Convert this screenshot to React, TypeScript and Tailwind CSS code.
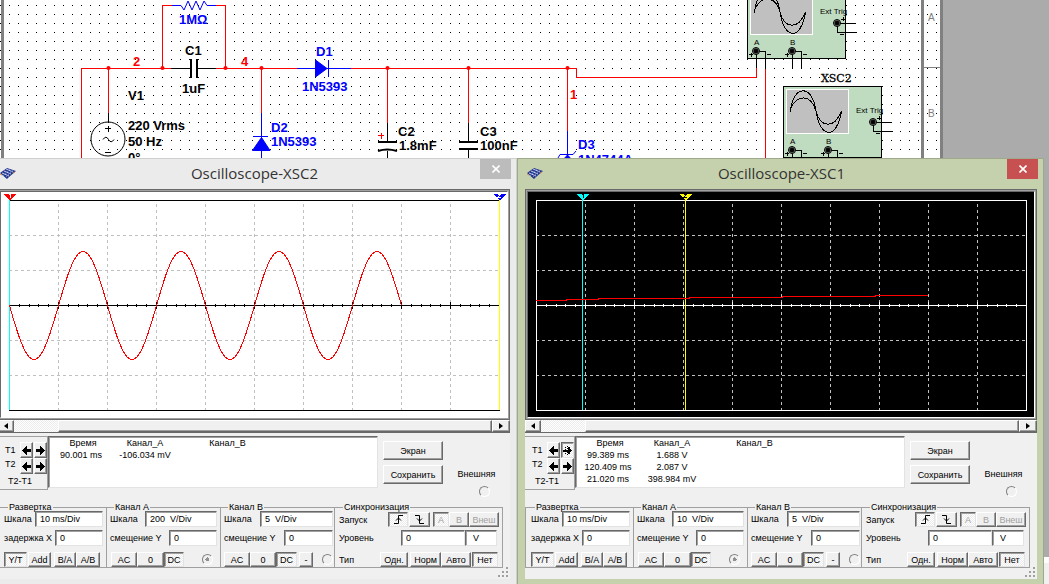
import { ReactNode } from "react";
import clsx from "clsx";

const raised =
    "border border-t-white border-l-white border-r-[#696969] border-b-[#696969] shadow-[inset_-1px_-1px_#a0a0a0] bg-[#f0f0f0]";
const sunken =
    "border border-t-[#696969] border-l-[#696969] border-r-[#e3e3e3] border-b-[#e3e3e3] shadow-[inset_1px_1px_#a0a0a0]";
const dither =
    "bg-[repeating-conic-gradient(#ffffff_0_25%,#ececec_0_50%)] bg-[length:2px_2px]";

type ScopeProps = {
    id: string;
    title: string;
    active?: boolean;
    className: string;
    rows: string[][];
    scaleA: string;
    children: ReactNode;
};

/* ---------- Schematic ---------- */

function Terminal({ x, y }: { x: number; y: number }) {
    return (
        <g>
            <circle cx={x} cy={y} r="3.5" fill="#888" stroke="#000" />
            <circle cx={x} cy={y} r="2" fill="#000" />
        </g>
    );
}

function ScopeSymbol({ x, y }: { x: number; y: number }) {
    return (
        <g transform={`translate(${x} ${y})`} fill="none" stroke="#000">
            <rect x="0.5" y="0.5" width="98" height="71" fill="#c0dcc0" />
            <rect x="3.5" y="3.5" width="62" height="44" fill="#c0c0c0" stroke="#fff" />
            <g shapeRendering="crispEdges">
                <path d="M7.5 26C9 0 29 -4 33 25C37 53 54 54 58.5 25" />
                <path d="M7.5 23C14 8 28 8 33 25C37 41 51 44 58.5 25" />
                <path d="M9.5 64v17M9.5 64.5h9v17M45.5 64v17M45.5 64.5h9v17M90 36.5h19M90.5 36v9.5h19" />
                <path d="M2 67.5h4M4.5 66v4M38 67.5h4M40.5 66v4M94 32.5h4M96.5 30v4M20 67.5h4M56 67.5h4M93 47.5h4" />
            </g>
            <Terminal x={9} y={64} />
            <Terminal x={45} y={64} />
            <Terminal x={90} y={36} />
            <g fill="#000" stroke="none" fontSize="8">
                <text x="7" y="58">A</text>
                <text x="43" y="58">B</text>
                <text x="73" y="27">Ext Trig</text>
            </g>
        </g>
    );
}

function Schematic() {
    const junctions = [108, 162, 225, 261, 387, 468, 567];

    return (
        <svg width="943" height="584" className="block bg-white font-['Liberation_Sans',sans-serif]" aria-label="Schematic">
            <defs>
                <pattern id="dots" width="9" height="9" patternUnits="userSpaceOnUse">
                    <rect x="0" y="5" width="1" height="1" fill="#000" />
                </pattern>
            </defs>
            <rect width="943" height="584" fill="url(#dots)" />
            <g fill="#808080" shapeRendering="crispEdges">
                <rect x="1" width="3" height="584" />
                <rect x="921" width="3" height="584" />
                <rect x="940" width="3" height="584" />
                <rect x="924" y="67" width="16" height="1" />
            </g>
            <g fill="none" stroke="#f00" shapeRendering="crispEdges">
                <path d="M81.5 160V68.5H171M216 68.5H297M351 68.5H576.5V77.5H756.5V68M765.5 68V160" />
                <path d="M162.5 68V5.5H172M216 5.5H225.5V68M108.5 68V113M261.5 68V113M387.5 68V123M468.5 68V123M567.5 68V131" />
            </g>
            {junctions.map((x) => (
                <circle key={x} cx={x + 0.5} cy="68" r="2" fill="#f00" />
            ))}
            <g fill="none" stroke="#00f">
                <path d="M172 5.5H181L184 10L188 1L192 10L196 1L200 10L204 1L207 5.5H216" />
                <path d="M297 68.5H351M328.5 60V77M261.5 113V160M253 136.5H268M567.5 131V156M558 158L560 154.5H573L576 151" />
                <path d="M315.5 60V77L327 68.5ZM252.5 150.5H270L261.5 137.5ZM561 162H574L567.5 155Z" fill="#00f" />
            </g>
            <g fill="none" stroke="#000">
                <path d="M171 68.5H190M198 68.5H216M108.5 113V122M387.5 123V142M387.5 151V160M468.5 123V142M468.5 149V160" />
                <path d="M191 59V78M197 59V78M378 142H397M459 142H478M459 149H478M378 151Q387 148 397 151" strokeWidth="2" />
                <circle cx="108" cy="139" r="17" />
                <path d="M105 128.5h6M108.5 126v6M105 152.5h6M103 139.5Q106 135 108.5 139.5T114 139.5" />
            </g>
            <path d="M378 135.5h6M381 132.5v6" stroke="#f00" fill="none" shapeRendering="crispEdges" />
            <ScopeSymbol x={747} y={-13} />
            <ScopeSymbol x={783} y={86} />
            <g fontSize="13" fontWeight="bold" className="fill-black">
                <text x="185" y="55">C1</text>
                <text x="182" y="93">1uF</text>
                <text x="128" y="100">V1</text>
                <text x="128" y="130">220 Vrms</text>
                <text x="128" y="146">50 Hz</text>
                <text x="128" y="162">0°</text>
                <text x="398" y="136">C2</text>
                <text x="399" y="150">1.8mF</text>
                <text x="480" y="136">C3</text>
                <text x="480" y="150">100nF</text>
            </g>
            <g fontSize="13" fontWeight="bold" className="fill-[#0000ff]">
                <text x="179" y="24">1MΩ</text>
                <text x="316" y="56">D1</text>
                <text x="302" y="91">1N5393</text>
                <text x="271" y="132">D2</text>
                <text x="271" y="146">1N5393</text>
                <text x="578" y="149">D3</text>
                <text x="578" y="164">1N4744A</text>
            </g>
            <g fontSize="13" fontWeight="bold" className="fill-[#ff0000]">
                <text x="133" y="66">2</text>
                <text x="241" y="66">4</text>
                <text x="570" y="99">1</text>
            </g>
            <g fontSize="10" className="fill-[#808080]">
                <text x="928" y="21">A</text>
                <text x="928" y="117">B</text>
            </g>
            <text x="821" y="82" fontSize="11" stroke="#000" strokeWidth="0.3" className="font-['DejaVu_Serif',serif]">XSC2</text>
        </svg>
    );
}

/* ---------- Plots ---------- */

type PlotProps = {
    background: string;
    ink: string;
    grid: string;
    cursors: { x: number; line: string; flag: string; ink: string }[];
    trace: string;
};

function Plot({ background, ink, grid, cursors, trace }: PlotProps) {
    const columns = [1, 2, 3, 4, 5, 6, 7, 8, 9];
    const ticks = Array.from({ length: 49 }, (_, i) => i + 1);

    return (
        <svg viewBox="3 3 506 225" className="block w-full" style={{ background }} shapeRendering="crispEdges">
            <g fill="none" stroke={grid} strokeDasharray="3 3">
                {columns.map((c) => (
                    <path key={c} d={`M${11.5 + c * 49} 15V221`} />
                ))}
                {[1, 2, 4, 5].map((r) => (
                    <path key={r} d={`M11 ${11.5 + r * 35}H501`} />
                ))}
            </g>
            <rect x="11.5" y="11.5" width="490" height="210" fill="none" stroke={ink} />
            <path d="M11 116.5H501" stroke={ink} />
            {ticks.map((t) => {
                const x = Math.round(11 + t * 9.8) + 0.5;
                const h = t % 5 === 0 ? 3 : 1;
                return <path key={t} d={`M${x} ${116 - h}V${117 + h}`} stroke={ink} />;
            })}
            {cursors.map((c, i) => (
                <g key={c.x}>
                    <path d={`M${c.x + 0.5} 11V221`} stroke={c.line} />
                    <path d={`M${c.x - 6} 5H${c.x + 7}L${c.x + 0.5} 11.5Z`} fill={c.flag} />
                    {i === 0 ? (
                        <path d={`M${c.x} 5.5h1v3.5`} stroke={c.ink} fill="none" />
                    ) : (
                        <path d={`M${c.x - 1} 5.5h2.5L${c.x - 1} 8.5h3`} stroke={c.ink} fill="none" />
                    )}
                </g>
            ))}
            <path d={trace} fill="none" stroke="#f00" />
        </svg>
    );
}

const sine = Array.from({ length: 393 }, (_, i) => {
    const y = 116.5 + 54 * Math.sin((i / 98) * 2 * Math.PI);
    return `${i ? "L" : "M"}${11.5 + i} ${y.toFixed(1)}`;
}).join("");

const ramp = "M11 111.5H41V110.5H73V109.5H164V108.5H257V107.5H350V106.5H403";

/* ---------- Controls ---------- */

function Btn({ children, className, pressed, disabled, label }: {
    children: ReactNode;
    className?: string;
    pressed?: boolean;
    disabled?: boolean;
    label?: string;
}) {
    return (
        <button
            type="button"
            aria-label={label}
            aria-pressed={pressed}
            disabled={disabled}
            className={clsx(
                "flex shrink-0 items-center justify-center whitespace-nowrap",
                pressed ? clsx(sunken, dither) : raised,
                disabled && "text-[#a0a0a0]",
                className
            )}
        >
            {children}
        </button>
    );
}

function Field({ id, label, value, className }: { id: string; label: string; value: string; className: string }) {
    return (
        <div className="flex h-4 items-center justify-between">
            <label htmlFor={id} className="whitespace-nowrap">{label}</label>
            <input id={id} defaultValue={value} className={clsx("h-4 bg-white pl-1 whitespace-pre", sunken, className)} />
        </div>
    );
}

function Radio({ label, name, checked, className }: { label: string; name: string; checked?: boolean; className?: string }) {
    return (
        <input
            type="radio"
            name={name}
            aria-label={label}
            defaultChecked={checked}
            className={clsx(
                "size-[11px] shrink-0 appearance-none rounded-full border border-t-[#808080] border-l-[#808080] border-r-white border-b-white bg-[#f0f0f0] checked:bg-[radial-gradient(#909090_0_2px,#f0f0f0_2px)]",
                className
            )}
        />
    );
}

function Group({ title, children, className }: { title: string; children: ReactNode; className: string }) {
    return (
        <fieldset className={clsx("min-w-0 border-y border-l border-[#a0a0a0]", className)}>
            <legend className="ml-1 px-px leading-3">{title}</legend>
            <div className="-mt-[2px] flex flex-col gap-[3px]">{children}</div>
        </fieldset>
    );
}

function ButtonRow({ children, className }: { children: ReactNode; className?: string }) {
    return <div className={clsx("mt-[3px] flex h-[15px] items-center *:[button]:h-[15px]", className)}>{children}</div>;
}

function Arrow({ right, pressed, label }: { right?: boolean; pressed?: boolean; label: string }) {
    return (
        <Btn label={label} pressed={pressed} className="h-4 w-[13px]">
            <svg viewBox="0 0 9 9" className={clsx("size-[9px]", right && "rotate-180")} shapeRendering="crispEdges">
                <path d={pressed ? "M0 4.5L4 1V3.5H9V5.5H4V8Z" : "M0 4.5L5 0V3H9V6H5V9Z"} />
                {pressed && <path d="M2.5 1V9M6.5 1V9M4.5 0V9" stroke="#000" strokeDasharray="1 1" fill="none" />}
            </svg>
        </Btn>
    );
}

function ChipIcon() {
    return (
        <svg viewBox="0 0 17 14" className="h-[14px] w-[17px]">
            <path d="M0 6L7 1L16 4L9 10L7 12Z" fill="#26368c" />
            <path d="M2 6L9 9M4 4L11 7M6 2L13 5" stroke="#c3cdf0" />
            <path d="M3 9L10 2M6 10L13 3" stroke="#6f82c8" strokeDasharray="2 1" />
            <path d="M0 7L2 8M13 6L15 5" stroke="#c98a4a" />
        </svg>
    );
}

/* ---------- Oscilloscope window ---------- */

function ScopeWindow({ id, title, active, className, rows, scaleA, children }: ScopeProps) {
    return (
        <section
            className={clsx(
                "absolute top-[158px] w-[527px] border px-[6px] pb-[6px] pl-[7px]",
                active ? "border-[#9da98a] bg-[#c5d1ac]" : "border-[#cfcfcf] bg-[#ebebeb]",
                className
            )}
        >
            <header className="-mr-px grid h-[30px] grid-cols-[31px_1fr_31px] items-start">
                <div className="pt-2 pl-[2px]">
                    <ChipIcon />
                </div>
                <h2 className="text-center font-['Open_Sans',sans-serif] text-[15px] leading-7 text-[#333]">{title}</h2>
                <button
                    type="button"
                    aria-label="Close"
                    className={clsx("flex h-5 items-center justify-center", active ? "bg-[#c75050]" : "bg-[#bcbcbc]")}
                >
                    <svg viewBox="0 0 8 8" className="size-2">
                        <path d="M0.5 0.5L7.5 7.5M7.5 0.5L0.5 7.5" stroke="#fff" strokeWidth="1.6" />
                    </svg>
                </button>
            </header>

            <div className="relative bg-[#f0f0f0] pb-[11px]">
                <div className="border border-[#696969] bg-[#a0a0a0] p-px">
                    <div className="border border-r-white border-b-white border-t-[#696969] border-l-[#696969]">{children}</div>
                </div>

                {/* Scrollbar */}
                <div className={clsx("flex h-[13px] border-b border-[#696969]", dither)}>
                    <Btn label="Scroll left" className="h-3 w-4">
                        <svg viewBox="0 0 4 6" className="h-[6px] w-1"><path d="M4 0V6L0 3Z" /></svg>
                    </Btn>
                    <div className={clsx("ml-11 h-3 flex-1", raised)} />
                    <Btn label="Scroll right" className="h-3 w-[18px]">
                        <svg viewBox="0 0 4 6" className="h-[6px] w-1"><path d="M0 0V6L4 3Z" /></svg>
                    </Btn>
                </div>

                {/* Cursor readout */}
                <div className="mt-[3px] flex h-[54px] items-start">
                    <div className="h-full w-[50px] shrink-0 border border-l-0 border-[#a0a0a0] pt-[5px] pl-[7px]">
                        <div className="flex h-4 items-center gap-px">
                            <span className="w-[14px]">T1</span>
                            <Arrow label="T1 left" />
                            <Arrow label="T1 right" right pressed={active} />
                        </div>
                        <div className="flex h-4 items-start gap-px">
                            <span className="w-[14px] leading-3">T2</span>
                            <Arrow label="T2 left" />
                            <Arrow label="T2 right" right />
                        </div>
                        <div className="pl-[3px] leading-[14px]">T2-T1</div>
                    </div>
                    <div className={clsx("h-[52px] w-[330px] bg-white", sunken)}>
                        <table className="w-[229px] table-fixed text-center leading-3">
                            <thead>
                                <tr>
                                    <th className="w-16 pl-1 font-normal">Время</th>
                                    <th className="w-16 font-normal">Канал_A</th>
                                    <th className="font-normal">Канал_B</th>
                                </tr>
                            </thead>
                            <tbody>
                                {rows.map((row) => (
                                    <tr key={row[0]}>
                                        {row.map((cell) => (
                                            <td key={cell} className="whitespace-nowrap">{cell}</td>
                                        ))}
                                    </tr>
                                ))}
                            </tbody>
                        </table>
                    </div>
                    <div className="flex flex-col gap-[5px] pt-[5px] pl-[5px]">
                        <Btn className="h-[19px] w-[60px]">Экран</Btn>
                        <Btn className="h-[19px] w-[60px]">Сохранить</Btn>
                    </div>
                    <div className="flex flex-1 flex-col items-center gap-[6px] pt-8 leading-3">
                        <span>Внешняя</span>
                        <Radio label="Внешняя" name={`${id}-ext`} className="ml-4" />
                    </div>
                </div>

                {/* Settings */}
                <div className="mt-[11px] mr-[7px] flex">
                    <Group title="Развертка" className="w-[108px] pr-[3px] pl-[5px]">
                        <Field id={`${id}-time`} label="Шкала" value="10 ms/Div" className="w-[68px]" />
                        <Field id={`${id}-x`} label="задержка X" value="0" className="w-12" />
                        <ButtonRow>
                            <Btn pressed className="w-[23px]">Y/T</Btn>
                            <Btn className="ml-px w-[23px]">Add</Btn>
                            <Btn className="ml-[3px] w-[22px]">B/A</Btn>
                            <Btn className="w-6">A/B</Btn>
                        </ButtonRow>
                    </Group>
                    <Group title="Канал A" className="w-[114px] pr-[3px] pl-[3px]">
                        <Field id={`${id}-a`} label="Шкала" value={scaleA} className="w-[72px]" />
                        <Field id={`${id}-ay`} label="смещение Y" value="0" className="w-12" />
                        <ButtonRow className="pl-px">
                            <Btn className="w-[26px]">AC</Btn>
                            <Btn className="w-[27px]">0</Btn>
                            <Btn pressed className="w-5">DC</Btn>
                            <Radio label="Канал A" name={`${id}-channel`} checked className="mr-1 ml-auto" />
                        </ButtonRow>
                    </Group>
                    <Group title="Канал B" className="w-[114px] pr-px pl-[3px]">
                        <Field id={`${id}-b`} label="Шкала" value="5  V/Div" className="w-[73px]" />
                        <Field id={`${id}-by`} label="смещение Y" value="0" className="w-[49px]" />
                        <ButtonRow>
                            <Btn className="w-[26px]">AC</Btn>
                            <Btn className="w-[26px]">0</Btn>
                            <Btn pressed className="w-[21px]">DC</Btn>
                            <Btn className="ml-[2px] w-[14px]">-</Btn>
                            <Radio label="Канал B" name={`${id}-channel`} className="ml-auto" />
                        </ButtonRow>
                    </Group>
                    <Group title="Синхронизация" className="flex-1 border-r pr-[3px] pl-1">
                        <div className="flex h-4 items-center pt-px *:[button]:h-[15px]">
                            <span className="mr-auto">Запуск</span>
                            <Btn pressed label="Rising edge" className="w-5">
                                <svg viewBox="0 0 9 9" className="size-[9px]" fill="none" stroke="#000">
                                    <path d="M0 8.5H4.5V0.5H9M2 5.5L4.5 3L7 5.5" />
                                </svg>
                            </Btn>
                            <Btn label="Falling edge" className="ml-px w-[21px]">
                                <svg viewBox="0 0 9 9" className="size-[9px]" fill="none" stroke="#000">
                                    <path d="M0 0.5H4.5V8.5H9M2 3.5L4.5 6L7 3.5" />
                                </svg>
                            </Btn>
                            <Btn pressed disabled className="ml-[3px] w-4">A</Btn>
                            <Btn disabled className="w-5">B</Btn>
                            <Btn disabled className="w-[30px]">Внеш</Btn>
                        </div>
                        <div className="flex h-4 items-center">
                            <label htmlFor={`${id}-level`} className="mr-auto">Уровень</label>
                            <input id={`${id}-level`} defaultValue="0" className={clsx("h-4 w-16 bg-white pl-1", sunken)} />
                            <input aria-label="V" defaultValue="V" className={clsx("mr-[2px] h-4 w-8 bg-white pl-[7px]", sunken)} />
                        </div>
                        <ButtonRow className="pr-px">
                            <span className="mr-auto leading-3">Тип</span>
                            <Btn className="w-7">Одн.</Btn>
                            <Btn className="ml-[2px] w-[31px]">Норм</Btn>
                            <Btn className="w-[30px]">Авто</Btn>
                            <Btn pressed className="ml-px w-[26px]">Нет</Btn>
                        </ButtonRow>
                    </Group>
                </div>

                {/* Resize grip */}
                <svg viewBox="0 0 11 11" className="absolute right-px bottom-px size-[11px]" fill="#a0a0a0">
                    <path d="M8 0h2v2h-2zM4 4h2v2h-2zM8 4h2v2h-2zM0 8h2v2h-2zM4 8h2v2h-2zM8 8h2v2h-2z" />
                </svg>
            </div>
        </section>
    );
}

export default function App() {
    return (
        <main className="relative h-screen overflow-hidden bg-[#ababab] font-['Liberation_Sans',sans-serif] text-[9px] leading-3 text-black">
            <Schematic />
            <div className="absolute right-0 bottom-0 h-[27px] w-2 border-t-[6px] border-white bg-[#f0f0f0]" />

            <ScopeWindow
                id="xsc2"
                title="Oscilloscope-XSC2"
                className="-left-[10px]"
                rows={[["90.001 ms", "-106.034 mV"]]}
                scaleA="200  V/Div"
            >
                <Plot
                    background="#fff"
                    ink="#000"
                    grid="#c0c0c0"
                    trace={sine}
                    cursors={[
                        { x: 11, line: "#0ff", flag: "#f00", ink: "#fff" },
                        { x: 501, line: "#ff0", flag: "#00f", ink: "#fff" },
                    ]}
                />
            </ScopeWindow>

            <ScopeWindow
                id="xsc1"
                title="Oscilloscope-XSC1"
                active
                className="left-[517px]"
                rows={[
                    ["99.389 ms", "1.688 V"],
                    ["120.409 ms", "2.087 V"],
                    ["21.020 ms", "398.984 mV"],
                ]}
                scaleA="10  V/Div"
            >
                <Plot
                    background="#000"
                    ink="#fff"
                    grid="#c0c0c0"
                    trace={ramp}
                    cursors={[
                        { x: 57, line: "#0ff", flag: "#0ff", ink: "#000" },
                        { x: 160, line: "#ff0", flag: "#ff0", ink: "#000" },
                    ]}
                />
            </ScopeWindow>
        </main>
    );
}
